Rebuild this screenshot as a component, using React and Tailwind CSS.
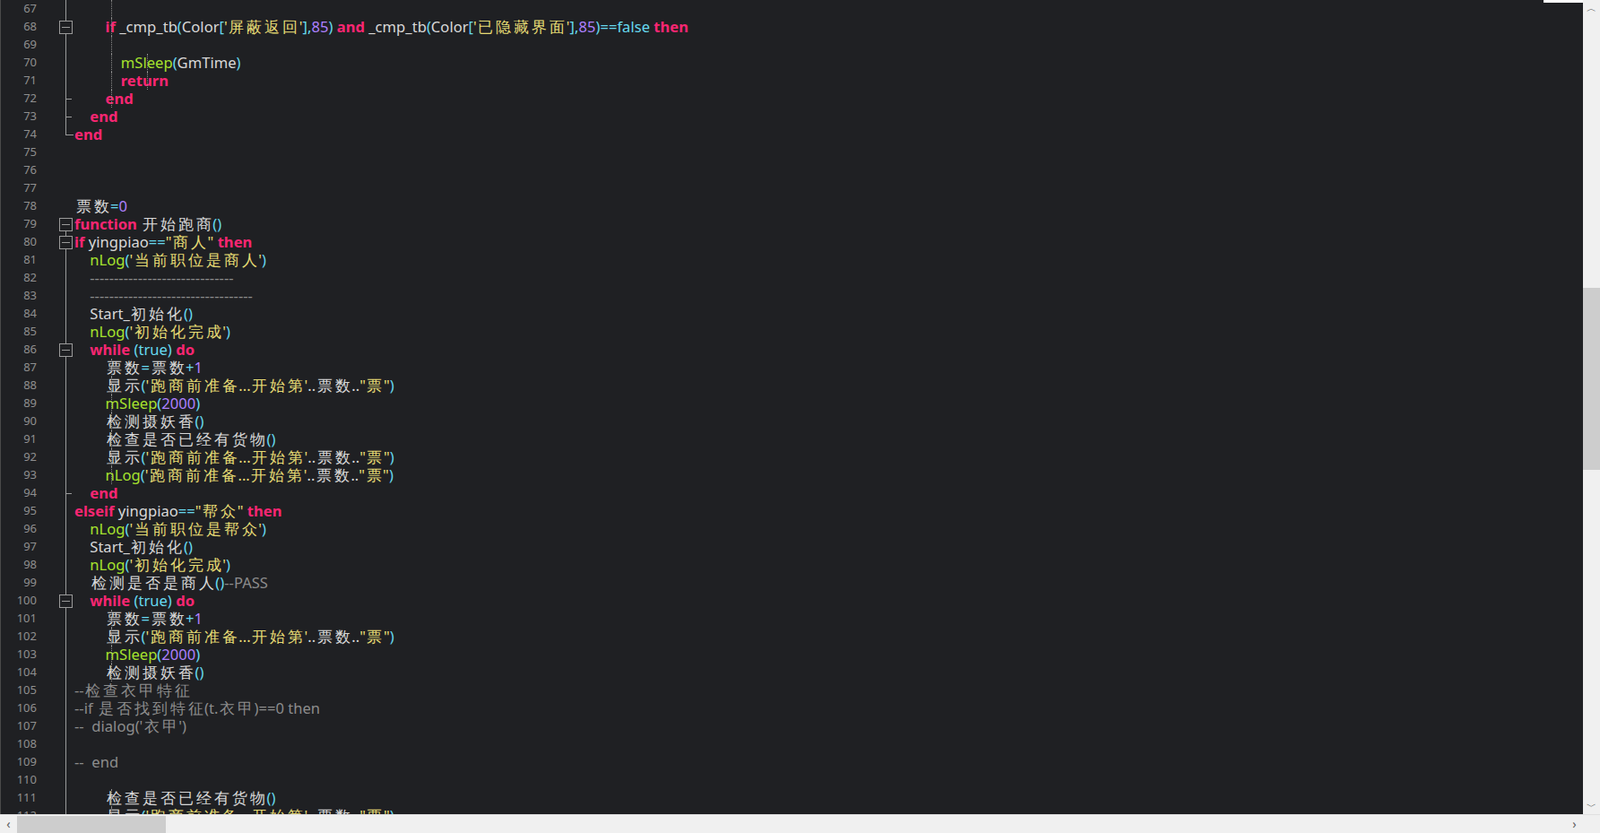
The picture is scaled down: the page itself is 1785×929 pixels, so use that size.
import React from "react";

const L = [
  [67, ""],
  [68, "        if _cmp_tb(Color['屏蔽返回'],85) and _cmp_tb(Color['已隐藏界面'],85)==false then"],
  [69, ""],
  [70, "            mSleep(GmTime)"],
  [71, "            return"],
  [72, "        end"],
  [73, "    end"],
  [74, "end"],
  [75, ""], [76, ""], [77, ""],
  [78, "票数=0"],
  [79, "function 开始跑商()"],
  [80, 'if yingpiao=="商人" then'],
  [81, "    nLog('当前职位是商人')"],
  [82, "    ------------------------------"],
  [83, "    ----------------------------------"],
  [84, "    Start_初始化()"],
  [85, "    nLog('初始化完成')"],
  [86, "    while (true) do"],
  [87, "        票数=票数+1"],
  [88, "        显示('跑商前准备...开始第'..票数..\"票\")"],
  [89, "        mSleep(2000)"],
  [90, "        检测摄妖香()"],
  [91, "        检查是否已经有货物()"],
  [92, "        显示('跑商前准备...开始第'..票数..\"票\")"],
  [93, "        nLog('跑商前准备...开始第'..票数..\"票\")"],
  [94, "    end"],
  [95, 'elseif yingpiao=="帮众" then'],
  [96, "    nLog('当前职位是帮众')"],
  [97, "    Start_初始化()"],
  [98, "    nLog('初始化完成')"],
  [99, "    检测是否是商人()--PASS"],
  [100, "    while (true) do"],
  [101, "        票数=票数+1"],
  [102, "        显示('跑商前准备...开始第'..票数..\"票\")"],
  [103, "        mSleep(2000)"],
  [104, "        检测摄妖香()"],
  [105, "--检查衣甲特征"],
  [106, "--if 是否找到特征(t.衣甲)==0 then"],
  [107, "--  dialog('衣甲')"],
  [108, ""],
  [109, "--  end"],
  [110, ""],
  [111, "        检查是否已经有货物()"],
  [112, "        显示('跑商前准备...开始第'..票数..\"票\")"],
];

const boxes = new Set([68, 79, 80, 86, 100]);
const ticks = new Set([72, 73, 94]);
const guides = {
  67: [1], 68: [1], 69: [1], 70: [1, 2], 71: [1, 2], 72: [1],
  87: [1], 88: [1], 89: [1], 90: [1], 91: [1], 92: [1], 93: [1],
  101: [1], 102: [1], 103: [1], 104: [1], 111: [1], 112: [1],
};
const KW = new Set(["if", "then", "end", "function", "while", "do", "return", "elseif", "and"]);
const GREEN = new Set(["nLog", "mSleep"]);
const CYANW = new Set(["false", "true"]);

const cjk = /[\u3000-\u9fff\uff00-\uffef]/;

function Txt({ s, cls }) {
  const parts = [];
  let buf = "";
  [...s].forEach((c, i) => {
    if (cjk.test(c)) {
      if (buf) { parts.push(buf); buf = ""; }
      parts.push(<span key={i} className="inline-block w-[20px] text-center font-['Noto_Sans_CJK_SC'] text-[17px] leading-[20px]">{c}</span>);
    } else buf += c;
  });
  if (buf) parts.push(buf);
  return <span className={cls}>{parts}</span>;
}

function tokenize(line) {
  const out = [];
  let i = 0;
  while (i < line.length) {
    const c = line[i];
    if (line.startsWith("--", i) && !/^-+$/.test(line.trim())) {
      out.push([line.slice(i), "text-[#8c8c8c]"]); break;
    }
    if (c === "'" || c === '"') {
      const j = line.indexOf(c, i + 1);
      out.push([line.slice(i, j + 1), "text-[#e6db74]"]); i = j + 1; continue;
    }
    if (/[0-9]/.test(c)) {
      let j = i; while (j < line.length && /[0-9]/.test(line[j])) j++;
      out.push([line.slice(i, j), "text-[#ae81ff]"]); i = j; continue;
    }
    if (/[()\[\]=+,]/.test(c)) {
      out.push([c, "text-[#66d9ef]"]); i++; continue;
    }
    if (/[A-Za-z_]/.test(c)) {
      let j = i; while (j < line.length && /[A-Za-z_0-9\u4e00-\u9fff]/.test(line[j])) j++;
      const w = line.slice(i, j);
      let cls = "text-[#d8d8d8]";
      if (KW.has(w)) cls = "text-[#f92672] font-bold";
      else if (GREEN.has(w)) cls = "text-[#a6e22e]";
      else if (CYANW.has(w)) cls = "text-[#66d9ef]";
      out.push([w, cls]); i = j; continue;
    }
    let j = i + 1;
    while (j < line.length && !/['"0-9()\[\]=+,A-Za-z_]/.test(line[j]) && !line.startsWith("--", j)) j++;
    const seg = line.slice(i, j);
    out.push([seg, /^-+$/.test(seg.trim()) && seg.trim() ? "text-[#8c8c8c]" : "text-[#d8d8d8]"]);
    i = j;
  }
  return out;
}

function Fold({ n }) {
  const inBlock = (n >= 67 && n <= 74) || n >= 79;
  return (
    <div className="relative w-[41px] h-[20px]">
      {inBlock && n !== 79 && n !== 74 && (
        <div className="absolute left-[31px] top-0 h-[20px] w-px bg-[#9a9a9a]" />
      )}
      {n === 79 && <div className="absolute left-[31px] top-[10px] h-[10px] w-px bg-[#9a9a9a]" />}
      {n === 74 && (
        <div className="absolute left-[31px] top-0 h-[11px] w-[9px] border-l border-b border-[#9a9a9a]" />
      )}
      {ticks.has(n) && <div className="absolute left-[31px] top-[10px] h-px w-[7px] bg-[#9a9a9a]" />}
      {boxes.has(n) && (
        <div className="absolute left-[24px] top-[3px] h-[15px] w-[15px] border border-[#9a9a9a] bg-[#1f2023] flex items-center justify-center">
          <div className="h-px w-[9px] bg-[#9a9a9a]" />
        </div>
      )}
    </div>
  );
}

export default function App() {
  return (
    <div className="w-[1785px] h-[929px] flex flex-col bg-[#f0f0f0] overflow-hidden font-['Liberation_Mono']">
      <div className="flex flex-1 min-h-0">
        <div className="relative flex-1 bg-[#1f2023] overflow-hidden border-l border-[#4a4a4a]">
          <div className="absolute right-0 top-0 h-[3px] w-[44px] bg-white" />
          {L.map(([n, t]) => (
            <div key={n} className="flex h-[20px] items-center whitespace-pre">
              <div className="w-[41px] pr-[1px] text-right text-[13px] text-[#8f8f8f]">{n}</div>
              <Fold n={n} />
              <div className="relative flex-1 h-[20px] text-[16.6px] leading-[20px] whitespace-pre">
                {(guides[n] || []).map((g) => (
                  <div key={g} className="absolute top-0 h-[20px] border-l border-dotted border-[#8a8a8a]" style={{ left: g * 40 + 1 }} />
                ))}
                {tokenize(t).map(([s, c], k) => <Txt key={k} s={s} cls={c} />)}
              </div>
            </div>
          ))}
        </div>
        <div className="w-[19px] flex flex-col items-center bg-[#f0f0f0]">
          <div className="h-[18px] flex items-center justify-center text-[#606060] text-[11px]">︿</div>
          <div className="h-[303px]" />
          <div className="h-[203px] w-full bg-[#cdcdcd]" />
          <div className="flex-1" />
          <div className="h-[18px] flex items-center justify-center text-[#606060] text-[11px]">﹀</div>
        </div>
      </div>
      <div className="h-[21px] flex items-center bg-[#f0f0f0] border-t border-[#e0e0e0]">
        <div className="w-[19px] text-center text-[#606060] text-[14px] leading-none">‹</div>
        <div className="h-[19px] w-[166px] bg-[#cdcdcd]" />
        <div className="flex-1" />
        <div className="w-[19px] text-center text-[#606060] text-[14px] leading-none">›</div>
        <div className="w-[19px]" />
      </div>
    </div>
  );
}
